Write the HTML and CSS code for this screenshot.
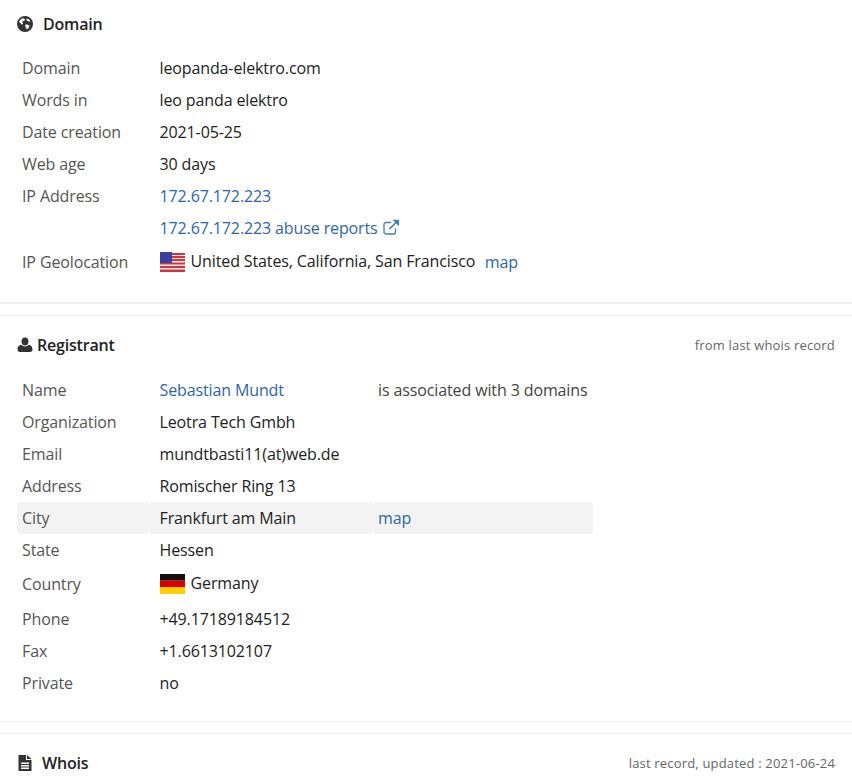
FILE: index.html
```html
<!DOCTYPE html>
<html lang="en">
<head>
<meta charset="utf-8">
<title>leopanda-elektro.com</title>
<link rel="stylesheet" href="styles.css">
</head>
<body>
<section class="panel panel-domain">
  <header class="panel-head">
    <h2 class="panel-title title-wide">
      <svg class="icon" viewBox="0 0 16 16"><path fill="#333" fill-rule="evenodd" d="M8 0a8 8 0 1 1 0 16A8 8 0 0 1 8 0zM5.200 2.200C3.600 3 2.500 4.400 2.100 6.200l1.300.5.700 1.500 1.300.3.800-1-.9-1.300.6-1.100 1.600-.4.400-1.400-1-.8zM9.300 8.200l-1.200.9.600 2.300 1 1.800 1.300-.3 1.200-2.100.3-1.400zM10 2.600l-.7 1 1 1.300 2.300.7.900-.4C12.800 3.900 11.600 3 10 2.600z"/></svg>
      Domain
    </h2>
  </header>
  <table class="facts">
    <tr><th>Domain</th><td>leopanda-elektro.com</td></tr>
    <tr><th>Words in</th><td>leo panda elektro</td></tr>
    <tr><th>Date creation</th><td>2021-05-25</td></tr>
    <tr><th>Web age</th><td>30 days</td></tr>
    <tr><th>IP Address</th><td><a href="#">172.67.172.223</a></td></tr>
    <tr><th></th><td><a href="#">172.67.172.223 abuse reports
      <svg class="ext" viewBox="0 0 16 16"><path fill="none" stroke="#3f7cc0" stroke-width="1.300" d="M12.500 9.500v3.500a2 2 0 0 1-2 2H3a2 2 0 0 1-2-2V5.500a2 2 0 0 1 2-2h5"/><path fill="none" stroke="#3f7cc0" stroke-width="1.700" d="M6.500 10L14.500 2"/><path fill="#3f7cc0" d="M9.500.8H16v6.400z"/></svg></a></td></tr>
    <tr class="row-flag"><th>IP Geolocation</th><td>
      <svg class="flag" viewBox="0 0 25 20"><rect width="25" height="20" fill="#f4f4f4"/><path fill="#d8323c" d="M0 1h25v2H0zM0 4h25v2H0zM0 7h25v2H0zM0 10.500h25v2H0zM0 14h25v2H0zM0 17.500h25v2.500H0z"/><rect width="12" height="11" fill="#3c3f9e"/></svg>
      <span class="place">United States, California, San Francisco</span><a class="geo-map" href="#">map</a></td></tr>
  </table>
</section>
<section class="panel panel-registrant">
  <header class="panel-head">
    <h2 class="panel-title">
      <svg class="icon" viewBox="0 0 16 16"><path fill="#333" d="M8 0.500c2.100 0 3.500 1.700 3.500 3.900S10.100 8.500 8 8.500 4.500 6.600 4.500 4.400 5.900.5 8 .5zM4.400 7.800C5.300 8.900 6.500 9.500 8 9.500s2.700-.6 3.600-1.700c2.200.3 3.900 1.600 3.900 4.800 0 1.600-1 2.400-2.300 2.400H2.800C1.500 15 .5 14.200.5 12.600c0-3.200 1.700-4.500 3.900-4.800z"/></svg>
      Registrant
    </h2>
    <span class="panel-note">from last whois record</span>
  </header>
  <table class="facts facts-three">
    <tr><th>Name</th><td><a href="#">Sebastian Mundt</a></td><td>is associated with 3 domains</td></tr>
    <tr><th>Organization</th><td>Leotra Tech Gmbh</td><td></td></tr>
    <tr><th>Email</th><td>mundtbasti11(at)web.de</td><td></td></tr>
    <tr><th>Address</th><td>Romischer Ring 13</td><td></td></tr>
    <tr class="row-hover"><th>City</th><td>Frankfurt am Main</td><td><a href="#">map</a></td></tr>
    <tr><th>State</th><td>Hessen</td><td></td></tr>
    <tr class="row-flag"><th>Country</th><td>
      <svg class="flag" viewBox="0 0 25 20"><rect width="25" height="6.700" fill="#111"/><rect y="6.700" width="25" height="6.600" fill="#dd0000"/><rect y="13.300" width="25" height="6.700" fill="#ffce00"/></svg>
      <span class="place">Germany</span></td><td></td></tr>
    <tr><th>Phone</th><td>+49.17189184512</td><td></td></tr>
    <tr><th>Fax</th><td>+1.6613102107</td><td></td></tr>
    <tr><th>Private</th><td>no</td><td></td></tr>
  </table>
</section>
<section class="panel panel-whois">
  <header class="panel-head">
    <h2 class="panel-title title-wide">
      <svg class="icon" viewBox="0 0 16 16"><path fill="#333" fill-rule="evenodd" d="M1.500 0H9v5h5.500v11h-13zM10 0l4.500 4H10zM4 7.500v1.500h8V7.500zM4 10v1.500h8V10zM4 12.500V14h8v-1.500z"/></svg>
      Whois
    </h2>
    <span class="panel-note">last record, updated : 2021-06-24</span>
  </header>
</section>
</body>
</html>
```

FILE: styles.css
```css
* { box-sizing: border-box; }
html, body { margin: 0; padding: 0; background: #fff; }
body {
  font-family: "Open Sans", "Liberation Sans", sans-serif;
  font-size: 16px;
  line-height: 24px;
  letter-spacing: -0.12px;
  color: #222;
  height: 783px;
  overflow: hidden;
}
a { color: #2b66ad; text-decoration: none; }

.panel { padding: 0 17px; }
.panel-domain { padding-top: 12px; height: 304px; border-bottom: 2px solid #f0f0f0; }
.panel-registrant { margin-top: 11px; height: 407px; padding-top: 17px; border-top: 1px solid #eee; border-bottom: 1px solid #eee; }
.panel-whois { margin-top: 11px; padding-top: 17px; border-top: 1px solid #eee; }

.panel-head { display: flex; justify-content: space-between; align-items: center; height: 24px; }
.panel-title { display: flex; align-items: center; gap: 4px; margin: 0; font-size: 16px; font-weight: 600; letter-spacing: -0.2px; color: #222; }
.title-wide { gap: 10px; }
.panel-whois .title-wide { gap: 9px; }
.icon { width: 16px; height: 16px; flex: none; }
.panel-note { font-size: 13px; letter-spacing: 0.18px; color: #666; }

.facts { border-collapse: separate; border-spacing: 0; margin-top: 16px; width: 576px; table-layout: fixed; }
.facts-three { margin-top: 17px; }
.facts th { width: 132px; padding: 4px 5px; font-weight: 400; text-align: left; color: #555; height: 32px; }
.facts td { padding: 4px 11px 4px 10.500px; vertical-align: middle; height: 32px; white-space: nowrap; }
.facts-three td:nth-child(2) { width: 224px; }
.facts-three td:nth-child(3) { padding-left: 5px; color: #444; }
.row-flag th { height: 37px; padding-top: 5px; padding-bottom: 6px; }
.row-flag td { height: 37px; padding-top: 4px; padding-bottom: 7px; }
.row-hover th, .row-hover td { background: #f3f3f3; border-radius: 3px; }

.flag { width: 25px; height: 20px; vertical-align: -4px; margin-right: 2px; }
.place { vertical-align: 1px; }
.ext { width: 16px; height: 16px; vertical-align: -1px; margin-left: 1px; }
.geo-map { margin-left: 9.500px; }
```
